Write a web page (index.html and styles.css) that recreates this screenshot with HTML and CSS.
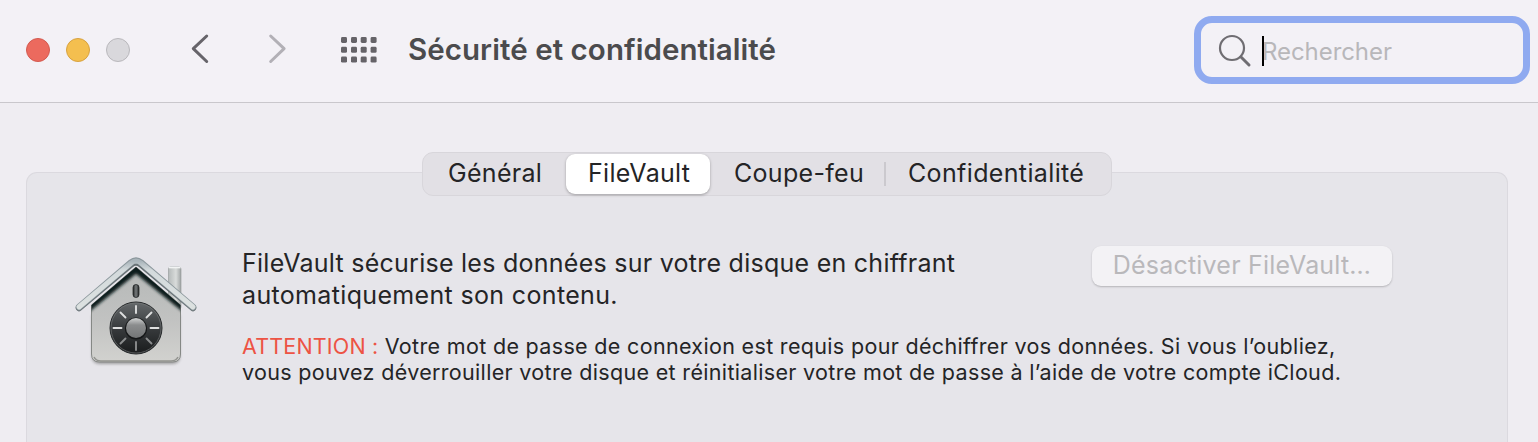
FILE: index.html
```html
<!DOCTYPE html>
<html lang="fr">
<head>
<meta charset="utf-8">
<title>Sécurité et confidentialité</title>
<link rel="stylesheet" href="styles.css">
</head>
<body>
<header class="toolbar">
  <div class="lights"><span class="light red"></span><span class="light yellow"></span><span class="light gray"></span></div>
  <svg class="back" width="20" height="32" viewBox="0 0 20 32"><path d="M16.700 4 3.300 16.700 16.700 29.500" fill="none" stroke="#66646a" stroke-width="3" stroke-linecap="round" stroke-linejoin="round"/></svg>
  <svg class="forward" width="20" height="32" viewBox="0 0 20 32"><path d="M2.700 4 16.100 16.700 2.700 29.500" fill="none" stroke="#b2b0b6" stroke-width="3" stroke-linecap="round" stroke-linejoin="round"/></svg>
  <svg class="grid" width="36" height="26" viewBox="0 0 36 26"><g fill="#656368"><rect x="0" y="0" width="6" height="6" rx="1.4"/><rect x="10" y="0" width="6" height="6" rx="1.4"/><rect x="19.7" y="0" width="6" height="6" rx="1.4"/><rect x="29.6" y="0" width="6" height="6" rx="1.4"/><rect x="0" y="9.8" width="6" height="6" rx="1.4"/><rect x="10" y="9.8" width="6" height="6" rx="1.4"/><rect x="19.7" y="9.8" width="6" height="6" rx="1.4"/><rect x="29.6" y="9.8" width="6" height="6" rx="1.4"/><rect x="0" y="19.6" width="6" height="6" rx="1.4"/><rect x="10" y="19.6" width="6" height="6" rx="1.4"/><rect x="19.7" y="19.6" width="6" height="6" rx="1.4"/><rect x="29.6" y="19.6" width="6" height="6" rx="1.4"/></g></svg>
  <h1 class="title">Sécurité et confidentialité</h1>
  <div class="search">
    <svg class="lens" width="34" height="34" viewBox="0 0 34 34"><g fill="none" stroke="#6f6d72" stroke-linecap="round"><circle cx="14" cy="14" r="12" stroke-width="2.2"/><path d="M23 23 31 31" stroke-width="3"/></g></svg>
    <span class="caret"></span><span class="placeholder">Rechercher</span>
  </div>
</header>
<main class="content">
  <nav class="tabs">
    <span class="tab general">Général</span>
    <span class="tab active">FileVault</span>
    <span class="tab firewall">Coupe-feu</span>
    <span class="tab privacy">Confidentialité</span>
  </nav>
  <section class="panel">
    <svg class="vault" width="130" height="120" viewBox="0 0 130 120">
      <defs>
        <linearGradient id="wall" x1="0" y1="0" x2="0" y2="1"><stop offset="0" stop-color="#b5b8b7"/><stop offset=".55" stop-color="#c1c2c1"/><stop offset="1" stop-color="#d2d2cf"/></linearGradient>
        <linearGradient id="roof" x1="0" y1="0" x2="0" y2="1"><stop offset="0" stop-color="#a9b4ba"/><stop offset=".2" stop-color="#d3dadc"/><stop offset="1" stop-color="#dce1e0"/></linearGradient>
        <linearGradient id="chimney"><stop offset="0" stop-color="#b5baba"/><stop offset=".6" stop-color="#d9dcdb"/><stop offset="1" stop-color="#a0a5a5"/></linearGradient>
        <linearGradient id="dial" x1="0" y1="0" x2="0" y2="1"><stop offset="0" stop-color="#65696b"/><stop offset=".5" stop-color="#383b3d"/><stop offset="1" stop-color="#191b1c"/></linearGradient>
        <linearGradient id="knob" x1="0" y1="0" x2="0" y2="1"><stop offset="0" stop-color="#d0d2d2"/><stop offset=".35" stop-color="#8b8d8e"/><stop offset="1" stop-color="#737576"/></linearGradient>
        <linearGradient id="slot"><stop offset="0" stop-color="#252829"/><stop offset=".5" stop-color="#777b7c"/><stop offset="1" stop-color="#252829"/></linearGradient>
        <filter id="soft" x="-20%" y="-20%" width="140%" height="140%"><feGaussianBlur stdDeviation="1.5"/></filter>
        <clipPath id="wallclip"><path d="M66 12 110.500 50V99Q110.500 107 102.500 107H29.500Q21.500 107 21.500 99V50Z"/></clipPath>
      </defs>
      <path d="M22 60V101Q22 109 30 109H102Q110 109 110 101V60" fill="#777" opacity=".65" filter="url(#soft)"/>
      <rect x="98.500" y="12" width="12.500" height="42" rx="2" fill="url(#chimney)" stroke="#909696" stroke-width=".6"/>
      <path d="M99 12.600H110.500" stroke="#f2f4f4" stroke-width="1.500"/>
      <path d="M66 12 110.500 50V99Q110.500 107 102.500 107H29.500Q21.500 107 21.500 99V50Z" fill="url(#wall)" stroke="#858885" stroke-width="1"/>
      <g clip-path="url(#wallclip)"><path d="M12 57 66 13 120 57" fill="none" stroke="#111b1c" stroke-width="9" filter="url(#soft)"/><path d="M24 102Q26 106 31 106H101Q106 106 108 102" fill="none" stroke="#92938f" stroke-width="1.500"/></g>
      <path d="M9 52 61 8.500Q66 4.500 71 8.500L123 52" transform="translate(0 1)" fill="none" stroke="#697276" stroke-width="6.500" stroke-linecap="round"/>
      <path d="M9 52 61 7.500Q66 3.500 71 7.500L123 52" fill="none" stroke="#8b979c" stroke-width="6.500" stroke-linecap="round"/>
      <path d="M9 52 61 8Q66 4 71 8L123 52" fill="none" stroke="url(#roof)" stroke-width="5" stroke-linecap="round"/>
      <rect x="63" y="29.500" width="6" height="13" rx="3" fill="url(#slot)" stroke="#171a1b" stroke-width=".7"/>
      <circle cx="66" cy="73" r="26" fill="url(#dial)" stroke="#242729"/>
      <circle cx="66" cy="73" r="25" fill="none" stroke="#777a7b" stroke-width=".6"/>
      <g stroke="#dedfdf" stroke-width="1.900" stroke-linecap="round"><path d="M66 51V58M43.500 73H51.500M80.500 73H88.500M50.500 57.500 55.500 62.500M81.500 57.500 76.500 62.500"/><path d="M66 87V95M50.500 88.500 55.500 83.500M81.500 88.500 76.500 83.500" stroke="#8b8d8e"/></g>
      <circle cx="66" cy="73.500" r="11" fill="#141617"/>
      <circle cx="66" cy="73" r="10" fill="url(#knob)"/>
    </svg>
    <div class="copy">
      <p class="lead"><span class="l1">FileVault sécurise les données sur votre disque en chiffrant</span><br><span class="l2">automatiquement son contenu.</span></p>
      <p class="warning"><span class="w0">ATTENTION :</span> <span class="w1">Votre mot de passe de connexion est requis pour déchiffrer vos données. Si vous l’oubliez,</span><br><span class="w2">vous pouvez déverrouiller votre disque et réinitialiser votre mot de passe à l’aide de votre compte iCloud.</span></p>
    </div>
    <button class="disable" disabled>Désactiver FileVault…</button>
  </section>
</main>
</body>
</html>
```
FILE: styles.css
```css
* { box-sizing: border-box; }
body { margin: 0; width: 1538px; height: 442px; overflow: hidden; background: #efedf2; color: #242426; font-family: Inter, "Liberation Sans", sans-serif; }
svg { display: block; flex: none; }
.toolbar { display: flex; align-items: flex-start; height: 103px; padding-left: 26px; background: #f3f1f6; border-bottom: 1px solid #c9c7cc; white-space: nowrap; }
.lights { display: flex; gap: 16px; padding-top: 38px; }
.light { width: 24px; height: 24px; border-radius: 50%; border: 1px solid; }
.red { background: #ec6a5e; border-color: #d35a50; }
.yellow { background: #f4bf4f; border-color: #d8a240; }
.gray { background: #d9d8dc; border-color: #b9b8bc; }
.back { margin: 32px 0 0 60px; }
.forward { margin: 32px 0 0 58px; }
.grid { margin: 36.500px 0 0 53px; }
.title { width: 786px; margin: 29px 0 0 31px; font-size: 29.500px; line-height: 40px; font-weight: 600; letter-spacing: .06px; color: #4b4b4d; }
.search { display: flex; width: 336px; height: 68px; margin-top: 16px; padding: 12px 0 0 17px; border: 7px solid #8faaf0; border-radius: 18px; background: #f3f1f6; }
.lens { margin-top: -1px; }
.caret { z-index: 1; width: 2px; height: 30px; margin: 1px -2px 0 10px; background: #000; }
.placeholder { font-size: 24px; line-height: 34px; letter-spacing: -.07px; color: #b8b7ba; }
.content { display: flex; flex-direction: column; align-items: center; padding: 49px 4px 0 0; }
.tabs { z-index: 1; display: flex; width: 690px; height: 44px; border: 1px solid #d8d6db; border-radius: 11px; background: #e2e0e5; font-size: 25px; line-height: 38px; letter-spacing: .3px; white-space: nowrap; }
.tab { height: 40px; margin-top: 1px; }
.general { width: 143px; padding-left: 25px; }
.active { width: 144px; padding-left: 22px; border-radius: 9px; background: #fff; box-shadow: 0 1px 3px rgba(0,0,0,.3); }
.firewall { width: 176px; height: 24px; margin-top: 9px; padding-left: 24px; line-height: 22px; border-right: 2px solid #cbc9ce; }
.privacy { padding-left: 22px; letter-spacing: .36px; }
.panel { display: flex; align-items: flex-start; width: 1482px; height: 290px; margin: -24px 0 -30px; padding-left: 43px; border: 1px solid #dbd9df; border-bottom: 0; border-radius: 11px 11px 0 0; background: #e6e5ea; white-space: nowrap; height: 270px; margin-bottom: 0; }
.vault { margin-top: 82px; }
.copy { width: 850px; margin-left: 42px; padding-top: 74px; }
.lead { margin: 0; font-size: 25px; line-height: 32px; letter-spacing: .26px; }
.l2 { letter-spacing: .34px; }
.warning { margin: 22px 0 0; font-size: 21.500px; line-height: 26px; letter-spacing: .33px; }
.w0 { color: #ed5344; letter-spacing: .18px; }
.disable { width: 300px; height: 40px; margin: 73px 0 0; padding: 0; border: 0; border-radius: 9px; background: #f3f2f5; box-shadow: 0 1px 2px rgba(0,0,0,.22); font: 25px/36px Inter, "Liberation Sans", sans-serif; letter-spacing: .2px; padding-bottom: 2px; color: #b9b8bb; }
```
